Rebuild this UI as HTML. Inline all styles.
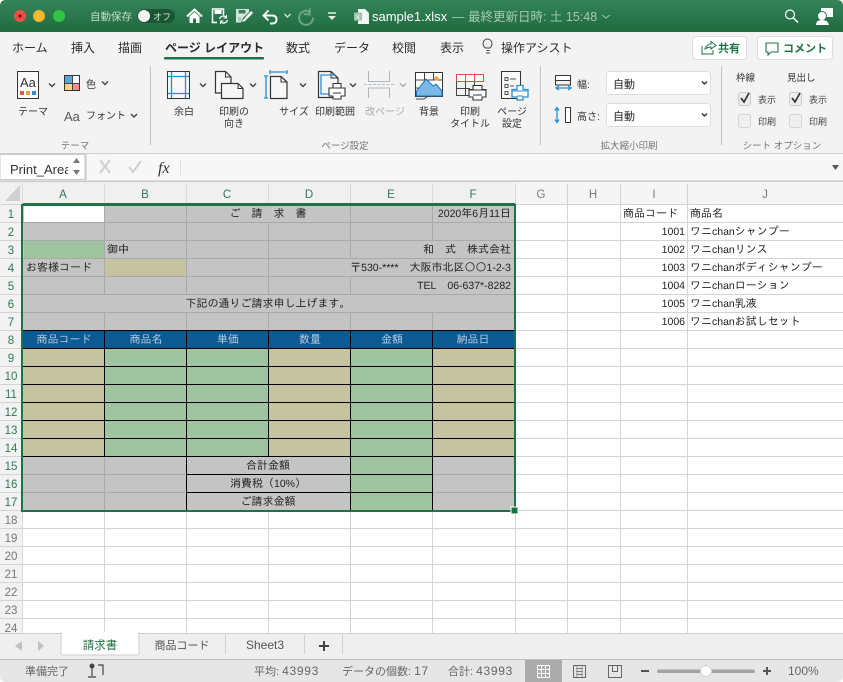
<!DOCTYPE html>
<html lang="ja"><head><meta charset="utf-8"><title>sample1.xlsx</title>
<style>
html,body{margin:0;padding:0;background:#fff;width:843px;height:682px;overflow:hidden}
svg{display:block}
text{font-family:"Liberation Sans","Noto Sans CJK JP",sans-serif;font-size:11px;fill:#333}
.t{font-size:12px;fill:#2b2b2b}
.b{font-size:12px;font-weight:bold;fill:#2b2b2b}
.r{font-size:10px;fill:#333;text-anchor:middle}
.g{font-size:9.5px;fill:#777;text-anchor:middle}
.c{font-family:"IPAGothic","Liberation Mono",monospace;font-size:11px;fill:#222;text-rendering:geometricPrecision}
.l{font-family:"Liberation Sans",sans-serif;font-size:10.5px}
.m{text-anchor:middle}
.e{text-anchor:end}
.h{font-family:"Liberation Sans",sans-serif;font-size:11.5px;text-anchor:middle;fill:#2f7a50}
.hg{fill:#777}
.s{font-size:11px;fill:#666}
.n{font-size:12px;letter-spacing:.7px;fill:#666}
.chev{fill:none;stroke:#444;stroke-width:1.4}
.ic{fill:#f7f7f7;stroke:#333;stroke-width:1.2}
.bl{fill:none;stroke:#2a8dd4;stroke-width:1.3}
</style></head><body>
<svg width="843" height="682" viewBox="0 0 843 682" xmlns="http://www.w3.org/2000/svg">
<defs><linearGradient id="tb" x1="0" y1="0" x2="0" y2="1"><stop offset="0" stop-color="#34845a"/><stop offset="1" stop-color="#1f6b3f"/></linearGradient></defs>

<!-- title bar -->
<path d="M0 32V6Q0 0 6 0H837Q843 0 843 6V32Z" fill="url(#tb)"/>
<circle cx="20" cy="16" r="6" fill="#ee5048"/><circle cx="20" cy="16" r="1.8" fill="#8d1a14"/>
<circle cx="39" cy="16" r="6" fill="#f5b82e"/>
<circle cx="59" cy="16" r="6" fill="#32c448"/>
<text x="90" y="20" style="font-size:10.5px;fill:#c8ddcf">自動保存</text>
<rect x="137" y="9" width="38" height="14" rx="7" fill="#1a5535"/>
<circle cx="144" cy="16" r="6" fill="#f5f5f5"/>
<text x="153" y="20" style="font-size:9px;fill:#d5e3da">オフ</text>
<!-- home -->
<path d="M187 16.500L194.500 9.500L202 16.500" fill="none" stroke="#fff" stroke-width="2"/>
<path d="M189.500 16.500V23H193V18.500H196V23H199.500V16.500L194.500 12Z" fill="#fff"/>
<!-- save-->
<path d="M217 22.500H212.500V9H223.500V15" fill="none" stroke="#fff" stroke-width="1.500"/><rect x="214.500" y="10" width="7" height="4" fill="#fff"/>
<path d="M219.500 19a4 4 0 0 1 7-1.500M227.500 20a4 4 0 0 1-7 1.500" fill="none" stroke="#fff" stroke-width="1.300"/>
<path d="M226.500 15V18H223.500M220.500 24V21H223.500" fill="none" stroke="#fff"/>
<!-- edit -->
<path d="M236 9H249V12L243 18L241 22.500H236Z" fill="#d7e6dc"/><rect x="238.500" y="10" width="7" height="3.500" fill="#3b7f5a"/><rect x="238" y="17" width="3" height="4" fill="#a8c8b4"/>
<path d="M243 20L251 11L253 13L245 21L242 22Z" fill="#fff"/>
<!-- undo -->
<path d="M268.500 10.500L263.500 15.500L268.500 20.500M264 15.500H272Q276.500 15.500 276.500 19.500T272 23.500H270" fill="none" stroke="#fff" stroke-width="1.900"/>
<path d="M284.500 14L287.500 17L290.500 14" fill="none" stroke="#dbe8df" stroke-width="1.300"/>
<!-- redo -->
<path d="M309 11.500A7 7 0 1 0 313 17.500" fill="none" stroke="#6ea386" stroke-width="2"/>
<path d="M310 8.500L309.500 14.500L303.500 14" fill="none" stroke="#6ea386" stroke-width="2"/>
<!-- customize -->
<path d="M328 13H336" stroke="#e7efe9" stroke-width="1.500"/><path d="M328 16H336L332 20Z" fill="#e7efe9"/>
<!-- file -->
<path d="M358 9H365L369 13V24H358Z" fill="#f2f5f3"/><rect x="354" y="12.500" width="8" height="8" fill="#9fc1ad"/>
<text x="355.500" y="19.500" style="font-size:7px;fill:#fff">X</text>
<text x="372" y="21" style="font-size:13px;fill:#fff">sample1.xlsx</text>
<text x="452" y="21" style="font-size:12.500px;fill:#a6c8b3">— 最終更新日時: 土 15:48</text>
<path d="M602 15L606 18L610 15" fill="none" stroke="#a6c8b3" stroke-width="1"/>
<!-- search/user -->
<circle cx="790" cy="14.500" r="4.500" fill="none" stroke="#fff" stroke-width="1.200"/><path d="M793.500 18L798 22.500" stroke="#fff" stroke-width="1.500"/>
<path d="M821 8H833V17H827L824 20V17H821Z" fill="#fff"/>
<circle cx="822" cy="16" r="4.500" fill="#fff" stroke="#2a7a50"/><path d="M816 25Q816 20 822 20T829 25Z" fill="#fff"/>

<!-- ribbon -->
<rect x="0" y="32" width="843" height="121" fill="#f4f3f3"/>
<rect x="0" y="153" width="843" height="1" fill="#cfcfcf"/>
<text x="12" y="52" class="t">ホーム</text>
<text x="71" y="52" class="t">挿入</text>
<text x="118" y="52" class="t">描画</text>
<text x="165" y="52" class="b">ページ レイアウト</text>
<rect x="164" y="57" width="100" height="2.500" rx="1" fill="#1f7244"/>
<text x="286" y="52" class="t">数式</text>
<text x="334" y="52" class="t">データ</text>
<text x="392" y="52" class="t">校閲</text>
<text x="440" y="52" class="t">表示</text>
<path d="M486 53h4M486.500 50.500h3M485.500 48Q483 46 483 43.500a4.500 4.500 0 0 1 9 0Q492 46 490 48Z" fill="none" stroke="#444" stroke-width="1"/>
<text x="501" y="52" class="t">操作アシスト</text>
<!-- share, comment -->
<rect x="692.500" y="36.500" width="54" height="23" rx="3" fill="#fff" stroke="#ddd"/>
<path d="M702 46V54H713V50M705 49Q707 44 711 44V41.500L716 45.500L711 49V47Q708 47 705 49Z" fill="none" stroke="#1f7244" stroke-width="1"/>
<text x="718" y="52" style="font-size:11px;font-weight:bold;fill:#1f7244">共有</text>
<rect x="757.500" y="36.500" width="75" height="23" rx="3" fill="#fff" stroke="#ddd"/>
<path d="M766 43H778V52H771L768 55V52H766Z" fill="none" stroke="#1f7244" stroke-width="1.100"/>
<text x="783" y="52" style="font-size:11px;font-weight:bold;fill:#1f7244">コメント</text>

<path d="M150.500 66V145M540.500 66V145M721.500 66V145" stroke="#c4c4c4"/>

<!-- theme -->
<rect x="17.500" y="71.500" width="21" height="27" fill="#fbfbfb" stroke="#333" stroke-width="1"/>
<text x="20" y="87" style="font-family:'Liberation Sans';font-size:13px;fill:#333">Aa</text>
<rect x="20" y="91" width="4" height="4" fill="#e8524a"/><rect x="26" y="91" width="4" height="4" fill="#f09a3e"/><rect x="32" y="91" width="4" height="4" fill="#2a8dd4"/>
<path class="chev" d="M49 83.500L52 86.500L55 83.500"/>
<text x="33" y="115" class="r">テーマ</text>
<rect x="64.500" y="75.500" width="15" height="15" fill="#fff" stroke="#333"/>
<rect x="65" y="76" width="7" height="7" fill="#5aa5dc"/><rect x="73" y="76" width="6" height="7" fill="#fafafa"/><rect x="65" y="84" width="7" height="6" fill="#f7d486"/><rect x="73" y="84" width="6" height="6" fill="#f58f8f"/>
<path d="M72.500 76V90M65 83.500H79" stroke="#444"/>
<text x="86" y="88" class="r" style="text-anchor:start">色</text>
<path class="chev" d="M102 81.500L105 84.500L108 81.500"/>
<text x="64" y="121" style="font-family:'Liberation Sans';font-size:13px;fill:#555">Aa</text>
<text x="86" y="119" class="r" style="text-anchor:start">フォント</text>
<path class="chev" d="M131 114L134 117L137 114"/>
<text x="75" y="149" class="g">テーマ</text>

<!-- margins -->
<rect x="167.500" y="71.500" width="22" height="27" fill="#f8f8f8" stroke="#333"/>
<path class="bl" d="M171.500 72V98M185.500 72V98M168 76.500H189M168 93.500H189"/>
<path class="chev" d="M200 83.500L203 86.500L206 83.500"/>
<text x="184" y="115" class="r">余白</text>
<!-- orientation -->
<path class="ic" d="M215.500 71.500H225.500L231 77V93H215.500Z"/><path d="M225.500 71.500V77H231" fill="none" stroke="#333"/>
<path class="ic" d="M221.500 83.500H238L243 88.500V98.500H221.500Z"/><path d="M238 83.500V88.500H243" fill="none" stroke="#333"/>
<path class="chev" d="M250 83.500L253 86.500L256 83.500"/>
<text x="234" y="115" class="r">印刷の</text><text x="234" y="127" class="r">向き</text>
<!-- size -->
<path class="ic" d="M270.500 76.500H281L287 82V98.500H270.500Z"/><path d="M281 76.500V82H287" fill="none" stroke="#333"/>
<path class="bl" d="M270 70V74M287 70V74M270 72H287M264 76H268M264 98H268M266 76V98"/>
<path class="chev" d="M300 83.500L303 86.500L306 83.500"/>
<text x="294" y="115" class="r">サイズ</text>
<!-- print area -->
<path class="ic" d="M318.500 71.500H331L338 78V97.500H318.500Z"/><path d="M331 71.500V78H338" fill="none" stroke="#333"/>
<path class="bl" d="M336 75H321V94H330"/>
<path d="M333 83.500H341V88H345V96H341V99H333V96H329V88H333Z" fill="#fff" stroke="#333" stroke-width="1.100"/><path d="M329 88H345M333 93H341" stroke="#333"/>
<path class="chev" d="M350 83.500L353 86.500L356 83.500"/>
<text x="335" y="115" class="r">印刷範囲</text>
<!-- breaks -->
<path d="M368.500 71V81.500H389.500V71M368.500 98V88H389.500V98" fill="none" stroke="#b5b5b5"/>
<path d="M364 84.500H394" stroke="#9cc8e6" stroke-dasharray="3 1.500"/>
<path d="M400 83.500L403 86.500L406 83.500" fill="none" stroke="#aaa" stroke-width="1.300"/>
<text x="385" y="115" class="r" style="fill:#aaa">改ページ</text>
<!-- background -->
<rect x="415.500" y="72.500" width="27" height="24" fill="#fff" stroke="#333"/>
<path d="M424.500 73V96M433.500 73V80M416 80H442M416 88H420" stroke="#444"/>
<path d="M416.500 91L426 79L433 86L436 84L442 91V96H416.500Z" fill="#7ab8e8" stroke="#1a73b8" stroke-width="1"/>
<circle cx="436.500" cy="78.500" r="2.200" fill="#f4a13c"/>
<path d="M416 99H424L428 96" fill="none" stroke="#444"/>
<text x="429" y="115" class="r">背景</text>
<!-- titles -->
<rect x="456.500" y="74.500" width="27" height="7" fill="#fff" stroke="#e8484a"/><path d="M465.500 74V81M474.500 74V81" stroke="#e8484a"/>
<path d="M456.500 82V95.500H471M465.500 82V95M474.500 82V85M457 88.500H470" fill="none" stroke="#444"/>
<path d="M473 85.500H482V89.500H486V97H482V100H473V97H469V89.500H473Z" fill="#fff" stroke="#333" stroke-width="1.100"/><path d="M469 90H486M473 95H482" stroke="#333"/>
<text x="470" y="115" class="r">印刷</text><text x="470" y="127" class="r">タイトル</text>
<!-- setup -->
<rect x="501.500" y="71.500" width="19" height="27" fill="#f8f8f8" stroke="#333"/>
<path d="M505 77.500h3v3h-3zM505 84.500h3v3h-3zM505 91.500h3v3h-3zM510 79h6M510 86h4" fill="none" stroke="#555"/>
<path d="M517 85.500H523V89.500H528V97H523V100H517V97H512V89.500H517Z" fill="#fff" stroke="#2a8dd4" stroke-width="1.300"/><path d="M512 91H528M517 96H523" stroke="#2a8dd4"/>
<text x="512" y="115" class="r">ページ</text><text x="512" y="127" class="r">設定</text>
<text x="345" y="149" class="g">ページ設定</text>

<!-- scale -->
<rect x="555.500" y="75.500" width="15" height="5" fill="#fff" stroke="#333"/><path d="M555.500 81V85H570.500V81" fill="none" stroke="#333"/>
<path class="bl" d="M556 88H571M559 86L556 88L559 90M568 86L571 88L568 90"/>
<text x="577" y="88" class="r" style="text-anchor:start">幅:</text>
<rect x="606.500" y="71.500" width="104" height="23" rx="3" fill="#fff" stroke="#ddd"/>
<text x="613" y="88" style="font-size:11px;fill:#222">自動</text>
<path d="M702 81.500L704.500 84L707 81.500" fill="none" stroke="#333" stroke-width="1.400"/>
<rect x="565.500" y="107.500" width="5" height="15" fill="#fff" stroke="#333"/>
<path class="bl" d="M557 108V122M555 110.500L557 107.500L559 110.500M555 119.500L557 122.500L559 119.500"/>
<text x="577" y="120" class="r" style="text-anchor:start">高さ:</text>
<rect x="606.500" y="103.500" width="104" height="23" rx="3" fill="#fff" stroke="#ddd"/>
<text x="613" y="120" style="font-size:11px;fill:#222">自動</text>
<path d="M702 113.500L704.500 116L707 113.500" fill="none" stroke="#333" stroke-width="1.400"/>
<text x="629" y="149" class="g">拡大縮小印刷</text>

<!-- sheet options -->
<text x="736" y="81" style="font-size:9.500px;fill:#333">枠線</text>
<text x="787" y="81" style="font-size:9.500px;fill:#333">見出し</text>
<rect x="738.500" y="92.500" width="12" height="13" rx="2" fill="#ececec" stroke="#ccc"/>
<rect x="789.500" y="92.500" width="12" height="13" rx="2" fill="#ececec" stroke="#ccc"/>
<path d="M741 98L744 102L749 93M792 98L795 102L800 93" fill="none" stroke="#333" stroke-width="1.700"/>
<rect x="738.500" y="114.500" width="12" height="13" rx="2" fill="#efefef" stroke="#d4d4d4"/>
<rect x="789.500" y="114.500" width="12" height="13" rx="2" fill="#efefef" stroke="#d4d4d4"/>
<text x="758" y="103" style="font-size:9px;fill:#444">表示</text>
<text x="809" y="103" style="font-size:9px;fill:#444">表示</text>
<text x="758" y="125" style="font-size:9px;fill:#444">印刷</text>
<text x="809" y="125" style="font-size:9px;fill:#444">印刷</text>
<text x="782" y="149" class="g">シート オプション</text>

<!-- formula bar -->
<rect x="0" y="154" width="843" height="27" fill="#f7f7f7"/>
<rect x="0" y="180.500" width="843" height="1.500" fill="#c8c8c8"/>
<rect x="0" y="154.500" width="85" height="25" fill="#fff" stroke="#c9c9c9"/>
<svg x="0" y="154" width="68" height="26"><text x="10" y="20" style="font-family:'Liberation Sans';font-size:13px;fill:#333">Print_Area</text></svg>
<path d="M76.500 158L80 163H73ZM76.500 175L80 170H73Z" fill="#777"/>
<path d="M86 154V180" stroke="#c9c9c9"/>
<path d="M100 160L110 173M110 160L100 173" stroke="#cfcfcf" stroke-width="2"/>
<path d="M129 167L133 172L141 161" fill="none" stroke="#cfcfcf" stroke-width="2"/>
<text x="158" y="173" style="font-family:'Liberation Serif';font-style:italic;font-size:16px;fill:#333">fx</text>
<path d="M180.500 160V175" stroke="#ddd"/>
<path d="M832 165H839L835.500 170Z" fill="#555"/>

<!-- sheet -->
<rect x="0" y="182" width="843" height="451" fill="#fff"/>
<rect x="0" y="182" width="843" height="22" fill="#f5f5f5"/>
<rect x="0" y="182" width="514" height="22" fill="#f0f0f0"/>
<rect x="0" y="204" width="22" height="429" fill="#f2f2f2"/>
<path d="M20 185V201H5Z" fill="#d0d0d0"/>
<path d="M22.500 183V633M104.500 184V204M186.500 184V204M268.500 184V204M350.500 184V204M432.500 184V204" stroke="#d9d9d9"/>
<g stroke="#d4d4d4">
<path d="M104.500 512V633M186.500 512V633M268.500 512V633M350.500 512V633M432.500 512V633M515.500 184V633M567.500 184V633M620.500 184V633M687.500 184V633"/>
<path d="M516 222.500H843M516 240.500H843M516 258.500H843M516 276.500H843M516 294.500H843M516 312.500H843M516 330.500H843M516 348.500H843M516 366.500H843M516 384.500H843M516 402.500H843M516 420.500H843M516 438.500H843M516 456.500H843M516 474.500H843M516 492.500H843M516 510.500H843"/>
<path d="M0 528.500H843M0 546.500H843M0 564.500H843M0 582.500H843M0 600.500H843M0 618.500H843M0 204.500H843" />
<path d="M0 222.500H22M0 240.500H22M0 258.500H22M0 276.500H22M0 294.500H22M0 312.500H22M0 330.500H22M0 348.500H22M0 366.500H22M0 384.500H22M0 402.500H22M0 420.500H22M0 438.500H22M0 456.500H22M0 474.500H22M0 492.500H22M0 510.500H22"/>
</g>

<!-- colored area -->
<rect x="23" y="205" width="491" height="305" fill="#c4c4c4"/>
<rect x="24" y="206" width="80" height="16" fill="#fff"/>
<rect x="24" y="241" width="81" height="18" fill="#9fc49f"/>
<rect x="105" y="258" width="82" height="18" fill="#c6c3a0"/>
<rect x="23" y="331" width="491" height="18" fill="#0c5a94"/>
<g fill="#c6c3a0"><rect x="23" y="349" width="82" height="108"/><rect x="269" y="349" width="82" height="108"/><rect x="433" y="349" width="81" height="108"/></g>
<g fill="#9fc49f"><rect x="105" y="349" width="164" height="108"/><rect x="351" y="349" width="82" height="162"/></g>
<g stroke="#a9a9a9">
<path d="M104.500 204V258M186.500 204V294M186.500 312V330M432.500 204V222M268.500 222V294M350.500 204V258M350.500 276V294M432.500 222V240M268.500 312V330M350.500 312V330M432.500 312V330M104.500 258V294M104.500 312V330M104.500 456V510"/>
<path d="M23 222.500H514M23 240.500H514M23 258.500H514M23 276.500H514M23 294.500H514M23 312.500H514M23 456.500H186M23 474.500H186M23 492.500H186M433 474.500H514M433 492.500H514"/>
</g>
<g stroke="#000">
<path d="M23 330.500H514M23 348.500H514M23 366.500H514M23 384.500H514M23 402.500H514M23 420.500H514M23 438.500H514M23 456.500H514"/>
<path d="M104.500 330V456M186.500 330V510M268.500 330V456M350.500 330V510M432.500 330V510"/>
<path d="M186 474.500H432M186 492.500H432"/>
</g>
<!-- selection -->
<rect x="22" y="205" width="493" height="306" fill="none" stroke="#1f7244" stroke-width="2"/>
<path d="M23 204H515" stroke="#1f7244" stroke-width="2"/>
<rect x="511" y="507" width="7" height="7" fill="#1f7244" stroke="#fff"/>

<!-- headers -->
<g>
<text x="63" y="198" class="h">A</text><text x="145" y="198" class="h">B</text><text x="227" y="198" class="h">C</text><text x="309" y="198" class="h">D</text><text x="391" y="198" class="h">E</text><text x="473" y="198" class="h">F</text>
<text x="541" y="198" class="h hg">G</text><text x="593" y="198" class="h hg">H</text><text x="654" y="198" class="h hg">I</text><text x="765" y="198" class="h hg">J</text>
</g>
<g class="rn">
<text x="11" y="218" class="h">1</text><text x="11" y="236" class="h">2</text><text x="11" y="254" class="h">3</text><text x="11" y="272" class="h">4</text><text x="11" y="290" class="h">5</text><text x="11" y="308" class="h">6</text><text x="11" y="326" class="h">7</text><text x="11" y="344" class="h">8</text><text x="11" y="362" class="h">9</text><text x="11" y="380" class="h">10</text><text x="11" y="398" class="h">11</text><text x="11" y="416" class="h">12</text><text x="11" y="434" class="h">13</text><text x="11" y="452" class="h">14</text><text x="11" y="470" class="h">15</text><text x="11" y="488" class="h">16</text><text x="11" y="506" class="h">17</text>
<text x="11" y="524" class="h hg">18</text><text x="11" y="542" class="h hg">19</text><text x="11" y="560" class="h hg">20</text><text x="11" y="578" class="h hg">21</text><text x="11" y="596" class="h hg">22</text><text x="11" y="614" class="h hg">23</text><text x="11" y="632" class="h hg">24</text>
</g>

<!-- cells -->
<text x="268" y="217" class="c m">ご　請　求　書</text>
<text x="511" y="217" class="c e"><tspan class="l">2020</tspan>年<tspan class="l">6</tspan>月<tspan class="l">11</tspan>日</text>
<text x="107" y="253" class="c">御中</text>
<text x="511" y="253" class="c e">和　式　株式会社</text>
<text x="26" y="271" class="c">お客様コード</text>
<text x="511" y="271" class="c e">〒<tspan class="l">530-****</tspan>　大阪市北区〇〇<tspan class="l">1-2-3</tspan></text>
<text x="511" y="289" class="c e"><tspan class="l">TEL</tspan>　<tspan class="l">06-637*-8282</tspan></text>
<text x="268" y="307" class="c m">下記の通りご請求申し上げます。</text>
<g style="fill:#b8cbdc">
<text x="64" y="343" class="c m" style="fill:#b8cbdc">商品コード</text>
<text x="146" y="343" class="c m" style="fill:#b8cbdc">商品名</text>
<text x="228" y="343" class="c m" style="fill:#b8cbdc">単価</text>
<text x="310" y="343" class="c m" style="fill:#b8cbdc">数量</text>
<text x="392" y="343" class="c m" style="fill:#b8cbdc">金額</text>
<text x="473" y="343" class="c m" style="fill:#b8cbdc">納品日</text>
</g>
<text x="268" y="469" class="c m">合計金額</text>
<text x="268" y="487" class="c m">消費税（<tspan class="l">10%</tspan>）</text>
<text x="268" y="505" class="c m">ご請求金額</text>
<text x="623" y="217" class="c">商品コード</text><text x="690" y="217" class="c">商品名</text>
<text x="685" y="235" class="c e"><tspan class="l">1001</tspan></text><text x="690" y="235" class="c">ワニ<tspan class="l">chan</tspan>シャンプー</text>
<text x="685" y="253" class="c e"><tspan class="l">1002</tspan></text><text x="690" y="253" class="c">ワニ<tspan class="l">chan</tspan>リンス</text>
<text x="685" y="271" class="c e"><tspan class="l">1003</tspan></text><text x="690" y="271" class="c">ワニ<tspan class="l">chan</tspan>ボディシャンプー</text>
<text x="685" y="289" class="c e"><tspan class="l">1004</tspan></text><text x="690" y="289" class="c">ワニ<tspan class="l">chan</tspan>ローション</text>
<text x="685" y="307" class="c e"><tspan class="l">1005</tspan></text><text x="690" y="307" class="c">ワニ<tspan class="l">chan</tspan>乳液</text>
<text x="685" y="325" class="c e"><tspan class="l">1006</tspan></text><text x="690" y="325" class="c">ワニ<tspan class="l">chan</tspan>お試しセット</text>

<!-- tab bar -->
<rect x="0" y="633" width="843" height="26" fill="#efefef"/>
<path d="M0 633.500H843" stroke="#cfcfcf"/>
<path d="M0 659.500H843" stroke="#bdbdbd"/>
<path d="M61 633H139V653Q139 655 137 655H63Q61 655 61 653Z" fill="#fff" stroke="#ccc"/>
<rect x="62" y="632" width="76" height="3" fill="#fff"/>
<path d="M15 646L22 641V651ZM44 646L38 641V651Z" fill="#c0c0c0"/>
<text x="100" y="649" class="m" style="font-size:11.500px;fill:#1f7244">請求書</text>
<text x="182" y="649" class="m" style="font-size:11px;fill:#555">商品コード</text>
<text x="265" y="649" class="m" style="font-family:'Liberation Sans';font-size:12px;fill:#555">Sheet3</text>
<path d="M225.500 635V654M304.500 635V654M342.500 635V654" stroke="#d0d0d0"/>
<path d="M324 641V651M319 646H329" stroke="#444" stroke-width="2"/>

<!-- status bar -->
<path d="M0 660H843V676Q843 682 837 682H6Q0 682 0 676Z" fill="#e6e6e6"/>
<text x="25" y="675" class="s">準備完了</text>
<circle cx="92" cy="666" r="2.500" fill="#444"/>
<path d="M92 668V676M88 677H96M98 665H103V675" fill="none" stroke="#444" stroke-width="1.200"/>
<text x="254" y="675" class="s">平均: <tspan class="n">43993</tspan></text>
<text x="342" y="675" class="s">データの個数: <tspan class="n">17</tspan></text>
<text x="448" y="675" class="s">合計: <tspan class="n">43993</tspan></text>
<rect x="525" y="660" width="37" height="22" fill="#ababab"/>
<path d="M537.500 665.500h12v12h-12zM541.500 665.500v12M545.500 665.500v12M537.500 669.500h12M537.500 673.500h12" fill="none" stroke="#fff"/>
<rect x="573.500" y="665.500" width="12" height="12" fill="none" stroke="#666"/><path d="M576 668.500H583M576 671.500H583M576 674.500H583" stroke="#777"/><path d="M577 666V677M582 666V677" stroke="#999"/>
<path d="M608.500 665.500H621.500V677.500H608.500ZM612.500 665.500V671.500H617.500V665.500" fill="none" stroke="#666"/>
<path d="M641 671H649" stroke="#555" stroke-width="2"/>
<rect x="657" y="669.500" width="98" height="3.500" rx="1.700" fill="#a3a3a3"/>
<circle cx="706" cy="671" r="5.500" fill="#fff" stroke="#d2d2d2"/>
<path d="M767 667V675M763 671H771" stroke="#555" stroke-width="2"/>
<text x="788" y="675" style="font-size:12px;fill:#666">100%</text>
</svg>
</body></html>
